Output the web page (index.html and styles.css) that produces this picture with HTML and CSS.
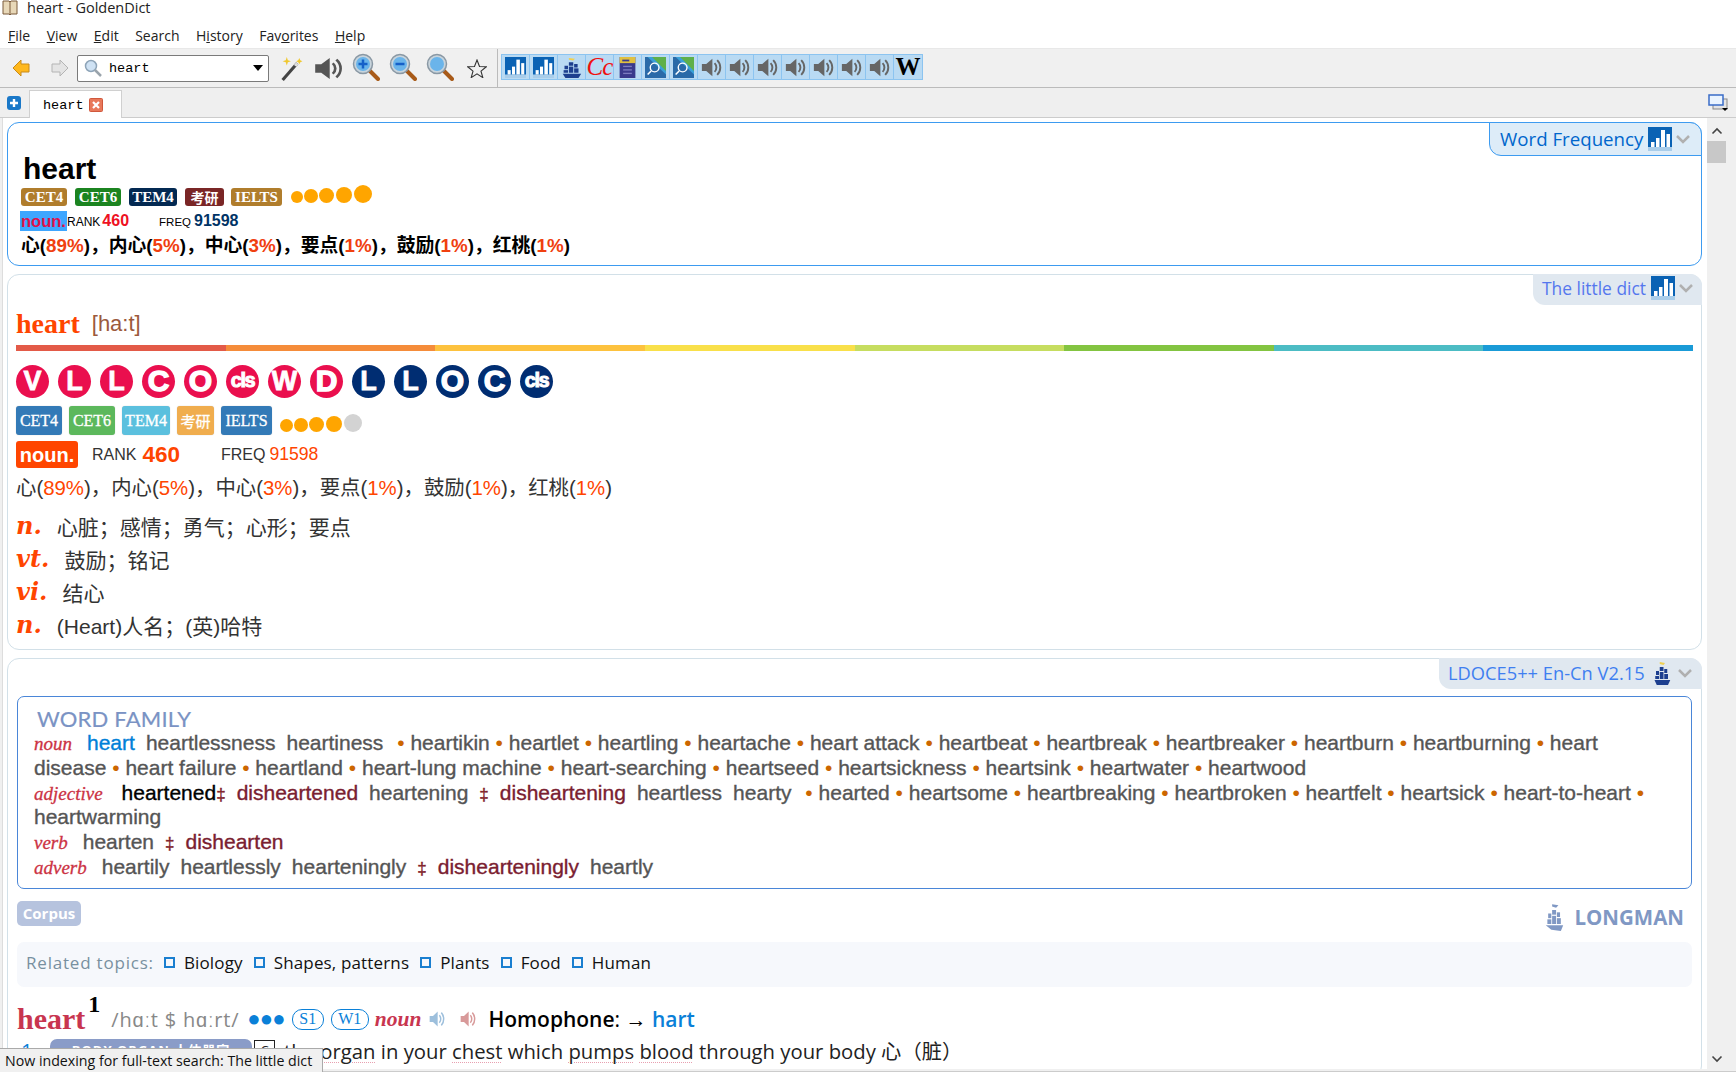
FILE: index.html
```html
<!DOCTYPE html>
<html lang="en">
<head>
<meta charset="utf-8">
<title>heart - GoldenDict</title>
<link rel="stylesheet" href="styles.css">
</head>
<body>
<svg class="defs" width="0" height="0" aria-hidden="true">
  <defs>
    <symbol id="bar" viewBox="0 0 24 24">
      <rect width="24" height="24" fill="#0a62b4"/>
      <rect y="20" width="24" height="4" fill="#a9cdea"/>
      <rect x="3" y="15" width="3.5" height="5" fill="#fff"/>
      <rect x="8" y="11" width="3.5" height="9" fill="#fff"/>
      <rect x="13" y="3" width="4" height="17" fill="#fff"/>
      <rect x="18.5" y="7" width="3.5" height="13" fill="#fff"/>
    </symbol>
    <symbol id="ship" viewBox="0 0 24 24" preserveAspectRatio="none">
      <path d="M9 1l7 1-2 2-5-1z" fill="#f0d050"/>
      <g fill="#1d3f8f">
        <rect x="4" y="10" width="4" height="4"/><rect x="9" y="6" width="5" height="4"/><rect x="15" y="8" width="4" height="4"/>
        <rect x="3" y="15" width="5" height="3"/><rect x="9" y="11" width="5" height="7"/><rect x="15" y="13" width="5" height="5"/>
        <path d="M2 19h21l-3 5H5z"/>
      </g>
    </symbol>
    <symbol id="shipm" viewBox="0 0 24 24" preserveAspectRatio="none">
      <path d="M9 1l8 1-3 2-5-1z" fill="currentColor"/>
      <g fill="currentColor">
        <rect x="4" y="9" width="4" height="4"/><rect x="9" y="6" width="5" height="4"/><rect x="15" y="8" width="4" height="4"/>
        <rect x="3" y="14" width="5" height="4"/><rect x="9" y="11" width="5" height="7"/><rect x="15" y="13" width="5" height="5"/>
        <path d="M1 19h22l-3 5-12-1z"/>
      </g>
    </symbol>
    <symbol id="book" viewBox="0 0 24 24">
      <rect x="3" y="0" width="18" height="24" fill="#3a3a8c"/>
      <rect x="3" y="0" width="18" height="7" fill="#e0c040"/>
      <rect x="6" y="3" width="8" height="2" fill="#3a3a8c"/>
      <rect x="7" y="10" width="10" height="1.5" fill="#7c7cc0"/>
      <rect x="7" y="14" width="10" height="1.5" fill="#7c7cc0"/>
      <rect x="7" y="18" width="10" height="1.5" fill="#7c7cc0"/>
    </symbol>
    <symbol id="find" viewBox="0 0 24 24">
      <rect width="24" height="24" fill="#2a6aa8"/>
      <path d="M6 0h18v18z" fill="#5fb04a"/>
      <path d="M3 0h5l16 16v4z" fill="#3aa0d8"/>
      <circle cx="11" cy="12" r="5" fill="none" stroke="#fff" stroke-width="1.6"/>
      <path d="M7 16l-4 4" stroke="#fff" stroke-width="1.8"/>
    </symbol>
    <symbol id="spk" viewBox="0 0 24 24" preserveAspectRatio="none">
      <path d="M1 8h5l7-6v20l-7-6H1z" fill="currentColor"/>
      <path d="M15.500 7a7 7 0 0 1 0 10M18.500 3.500a12 12 0 0 1 0 17" fill="none" stroke="currentColor" stroke-width="2.200"/>
    </symbol>
    <symbol id="glass" viewBox="0 0 28 28">
      <path d="M17 17l9 9" stroke="#a85a18" stroke-width="4" stroke-linecap="round"/>
      <circle cx="11" cy="11" r="9.500" fill="#c8d4dc" stroke="#8a98a4" stroke-width="1.500"/>
      <circle cx="11" cy="11" r="7" fill="#6ab4ea"/>
    </symbol>
  </defs>
</svg>

<header class="titlebar">
  <svg class="appicon" viewBox="0 0 16 15"><path d="M1 1h6l1 1 1-1h6v13H9l-1 1-1-1H1z" fill="#e8d8b8" stroke="#7a5a3a"/><path d="M8 2v12" stroke="#7a5a3a"/></svg>
  <span>heart - GoldenDict</span>
</header>

<nav class="menubar">
  <span><u>F</u>ile</span><span><u>V</u>iew</span><span><u>E</u>dit</span><span>Search</span><span>H<u>i</u>story</span><span>Fav<u>o</u>rites</span><span><u>H</u>elp</span>
</nav>

<section class="toolbar">
  <svg class="nav-arrow" viewBox="0 0 18 18"><path d="M1 9l8-8v4h8v8H9v4z" fill="#ffb81c" stroke="#c88a18"/></svg>
  <svg class="nav-arrow nav-fwd" viewBox="0 0 18 18"><path d="M17 9L9 1v4H1v8h8v4z" fill="#e4e4e4" stroke="#b4b4b4"/></svg>
  <div class="combo">
    <svg class="combo-mag" viewBox="0 0 18 18"><circle cx="7" cy="7" r="5.500" fill="#cfe2f4" stroke="#8ea4b8" stroke-width="1.500"/><path d="M11 11l6 6" stroke="#9aa4ac" stroke-width="2.500"/></svg>
    <span class="combo-text">heart</span>
    <span class="combo-arrow"></span>
  </div>
  <svg class="t-wand" viewBox="0 0 22 24"><path d="M2 23L16 7" stroke="#444" stroke-width="3"/><path d="M14 9.500l2-2.500" stroke="#ddd" stroke-width="3"/><path d="M6 1l1 3 3 1-3 1-1 3-1-3-3-1 3-1zM18 2l1 2 2 1-2 1-1 2-1-2-2-1 2-1z" fill="#f0c830"/></svg>
  <svg class="t-speaker"><use href="#spk"/></svg>
  <svg class="t-glass" viewBox="0 0 28 28"><use href="#glass"/><path d="M6.500 11h9M11 6.500v9" stroke="#1560c8" stroke-width="2.500"/></svg>
  <svg class="t-glass" viewBox="0 0 28 28"><use href="#glass"/><path d="M6.500 11h9" stroke="#1560c8" stroke-width="2.500"/></svg>
  <svg class="t-glass" viewBox="0 0 28 28"><use href="#glass"/></svg>
  <svg class="t-star" viewBox="0 0 20 19"><path d="M10 1l2.500 6.500 6.800.300-5.300 4.300 1.800 6.500L10 14.900l-5.800 3.700 1.800-6.500L.7 7.800l6.800-.300z" fill="none" stroke="#333" stroke-width="1.100"/></svg>
  <span class="sep"></span>
  <div class="dictbar">
    <button class="db"><svg><use href="#bar"/></svg></button>
    <button class="db"><svg><use href="#bar"/></svg></button>
    <button class="db"><svg><use href="#ship"/></svg></button>
    <button class="db db-cc">Cc</button>
    <button class="db"><svg><use href="#book"/></svg></button>
    <button class="db"><svg><use href="#find"/></svg></button>
    <button class="db"><svg><use href="#find"/></svg></button>
    <button class="db db-s"><svg><use href="#spk"/></svg></button>
    <button class="db db-s"><svg><use href="#spk"/></svg></button>
    <button class="db db-s"><svg><use href="#spk"/></svg></button>
    <button class="db db-s"><svg><use href="#spk"/></svg></button>
    <button class="db db-s"><svg><use href="#spk"/></svg></button>
    <button class="db db-s"><svg><use href="#spk"/></svg></button>
    <button class="db db-s"><svg><use href="#spk"/></svg></button>
    <button class="db db-w">W</button>
  </div>
</section>

<section class="tabstrip">
  <svg class="tab-plus" viewBox="0 0 14 14"><rect width="14" height="14" rx="3" fill="#1a78c8"/><path d="M7 3v8M3 7h8" stroke="#fff" stroke-width="2.400"/></svg>
  <div class="tab">
    <span>heart</span>
    <svg class="tab-close" viewBox="0 0 14 14"><rect x=".5" y=".5" width="13" height="13" rx="1" fill="#e8785a" stroke="#d0583c"/><path d="M4 4l6 6M10 4l-6 6" stroke="#fff" stroke-width="2.200"/></svg>
  </div>
  <svg class="tab-win" viewBox="0 0 20 17"><rect x="5" y="5" width="14" height="10" fill="#e4e4e4" stroke="#888"/><rect x="1" y="1" width="14" height="10" fill="#eaf4ff" stroke="#3a6cc8" stroke-width="1.500"/><path d="M14 14h6l-3 3z" fill="#000"/></svg>
</section>

<main class="main">
  <div class="pane">

    <article class="art art-active art-wf">
      <div class="art-tab tab-wf">
        <span>Word Frequency</span>
        <svg class="tab-icon"><use href="#bar"/></svg>
        <svg class="chev" viewBox="0 0 16 10"><path d="M2 2l6 6 6-6" fill="none" stroke="#b0b0b0" stroke-width="2.500"/></svg>
      </div>
      <h1 class="wf-word">heart</h1>
      <div class="badges wf-badges">
        <span class="bd c-brown">CET4</span><span class="bd c-green">CET6</span><span class="bd c-navy">TEM4</span><span class="bd c-maroon bd-cjk">考研</span><span class="bd c-brown">IELTS</span>
        <span class="dots wf-dots"><i class="d1"></i><i class="d2"></i><i class="d3"></i><i class="d4"></i><i class="d5"></i></span>
      </div>
      <div class="wf-pos">
        <span class="wf-noun">noun.</span><span class="wf-lab">RANK</span><span class="wf-red">460</span><span class="wf-lab wf-freq">FREQ</span><span class="wf-num">91598</span>
      </div>
      <p class="wf-cn">心(<b>89%</b>)，内心(<b>5%</b>)，中心(<b>3%</b>)，要点(<b>1%</b>)，鼓励(<b>1%</b>)，红桃(<b>1%</b>)</p>
    </article>

    <article class="art art-little">
      <div class="art-tab tab-little">
        <span>The little dict</span>
        <svg class="tab-icon"><use href="#bar"/></svg>
        <svg class="chev" viewBox="0 0 16 10"><path d="M2 2l6 6 6-6" fill="none" stroke="#b0b0b0" stroke-width="2.500"/></svg>
      </div>
      <div class="ld-head"><span class="ld-word">heart</span><span class="ld-ph">[ha:t]</span></div>
      <div class="rainbow"><i class="r1"></i><i class="r2"></i><i class="r3"></i><i class="r4"></i><i class="r5"></i><i class="r6"></i><i class="r7"></i><i class="r8"></i></div>
      <div class="circles">
        <span class="ci red">V</span><span class="ci red">L</span><span class="ci red">L</span><span class="ci red big">C</span><span class="ci red big">O</span><span class="ci red cls">cls</span><span class="ci red">W</span><span class="ci red big">D</span>
        <span class="ci navy">L</span><span class="ci navy">L</span><span class="ci navy big">O</span><span class="ci navy big">C</span><span class="ci navy cls">cls</span>
      </div>
      <div class="badges ld-badges">
        <span class="bd b-blue">CET4</span><span class="bd b-green">CET6</span><span class="bd b-cyan">TEM4</span><span class="bd b-orange bd-cjk">考研</span><span class="bd b-blue">IELTS</span>
        <span class="dots ld-dots"><i class="d1"></i><i class="d2"></i><i class="d3"></i><i class="d4"></i><i class="d5 off"></i></span>
      </div>
      <div class="ld-pos">
        <span class="ld-noun">noun.</span><span class="ld-lab">RANK</span><span class="ld-rank">460</span><span class="ld-lab ld-freq">FREQ</span><span class="ld-num">91598</span>
      </div>
      <p class="ld-cn">心(<b>89%</b>)，内心(<b>5%</b>)，中心(<b>3%</b>)，要点(<b>1%</b>)，鼓励(<b>1%</b>)，红桃(<b>1%</b>)</p>
      <ul class="defs-list">
        <li><em>n.</em><span>心脏；感情；勇气；心形；要点</span></li>
        <li><em>vt.</em><span>鼓励；铭记</span></li>
        <li><em>vi.</em><span>结心</span></li>
        <li><em>n.</em><span>(Heart)人名；(英)哈特</span></li>
      </ul>
    </article>

    <article class="art art-ldoce">
      <div class="art-tab tab-ldoce">
        <span>LDOCE5++ En-Cn V2.15</span>
        <svg class="tab-ship"><use href="#ship"/></svg>
        <svg class="chev" viewBox="0 0 16 10"><path d="M2 2l6 6 6-6" fill="none" stroke="#b0b0b0" stroke-width="2.500"/></svg>
      </div>
      <div class="family">
        <h2>WORD FAMILY</h2>
        <p>
          <em>noun</em><a class="self">heart</a><span class="w">heartlessness</span><span class="w w-end">heartiness</span>
          <i>•</i> heartikin <i>•</i> heartlet <i>•</i> heartling <i>•</i> heartache <i>•</i> heart attack <i>•</i> heartbeat <i>•</i> heartbreak <i>•</i> heartbreaker <i>•</i> heartburn <i>•</i> heartburning <i>•</i> heart disease <i>•</i> heart failure <i>•</i> heartland <i>•</i> heart-lung machine <i>•</i> heart-searching <i>•</i> heartseed <i>•</i> heartsickness <i>•</i> heartsink <i>•</i> heartwater <i>•</i> heartwood
        </p>
        <p>
          <em class="adj">adjective</em><span class="blk">heartened</span><s>‡</s><span class="neg">disheartened</span><span class="w">heartening</span><s>‡</s><span class="neg">disheartening</span><span class="w">heartless</span><span class="w w-end">hearty</span>
          <i>•</i> hearted <i>•</i> heartsome <i>•</i> heartbreaking <i>•</i> heartbroken <i>•</i> heartfelt <i>•</i> heartsick <i>•</i> heart-to-heart <i>•</i> heartwarming
        </p>
        <p><em>verb</em><span class="w">hearten</span><s>‡</s><span class="neg">dishearten</span></p>
        <p><em>adverb</em><span class="w">heartily</span><span class="w">heartlessly</span><span class="w">hearteningly</span><s>‡</s><span class="neg">dishearteningly</span><span class="w">heartly</span></p>
      </div>
      <div class="corpus-row">
        <span class="corpus">Corpus</span>
        <div class="longman"><svg><use href="#shipm"/></svg><span>LONGMAN</span></div>
      </div>
      <div class="topics">
        <span class="topics-label">Related topics:</span>
        <span class="topic">Biology</span><span class="topic">Shapes, patterns</span><span class="topic">Plants</span><span class="topic">Food</span><span class="topic">Human</span>
      </div>
      <div class="entry">
        <span class="hw">heart</span><sup class="hn">1</sup>
        <span class="pron">/hɑːt $ hɑːrt/</span>
        <span class="freq">●●●</span>
        <span class="pill">S1</span><span class="pill pill-w">W1</span>
        <span class="epos">noun</span>
        <svg class="sp sp-blue"><use href="#spk"/></svg>
        <svg class="sp sp-red"><use href="#spk"/></svg>
        <span class="homo"><b>Homophone</b>: → <a>hart</a></span>
      </div>
      <div class="sense">
        <span class="snum">1</span>
        <span class="sign">BODY ORGAN 人体器官</span>
        <span class="sbox">C</span>
        <span class="stext">the <u>organ</u> in your <u>chest</u> which <u>pumps</u> <u>blood</u> through your body 心（脏）</span>
      </div>
    </article>

  </div>
  <aside class="scroll">
    <svg class="sc-arrow" viewBox="0 0 12 8"><path d="M1.500 6.500L6 2l4.500 4.500" fill="none" stroke="#444" stroke-width="1.600"/></svg>
    <span class="sc-thumb"></span>
    <span class="sc-fill"></span>
    <svg class="sc-arrow" viewBox="0 0 12 8"><path d="M1.500 1.500L6 6l4.500-4.500" fill="none" stroke="#444" stroke-width="1.600"/></svg>
  </aside>
</main>

<div class="tip">Now indexing for full-text search: The little dict</div>
</body>
</html>
```

FILE: styles.css
```css
* { box-sizing: border-box; }
html, body { margin: 0; padding: 0; }
body {
  width: 1736px; height: 1072px; overflow: hidden; position: relative;
  background: #fff; color: #000;
  font-family: "Liberation Sans", "Noto Sans CJK SC", sans-serif;
  display: flex; flex-direction: column;
}
.defs { position: absolute; }
p, h1, h2, ul { margin: 0; padding: 0; }

.titlebar { height: 24px; display: flex; align-items: flex-start; font: 14.500px/15px "Open Sans", sans-serif; color: #222; }
.appicon { width: 16px; height: 15px; margin: 0 9px 0 2px; }

.menubar { height: 24px; display: flex; gap: 16.500px; padding-left: 8px; font: 14px/24px "Open Sans", sans-serif; color: #222; }

.toolbar { height: 40px; background: #f0f0f0; border-bottom: 1px solid #bbb; border-top: 1px solid #e8e8e8; display: flex; align-items: center; position: relative; }
.nav-arrow { width: 18px; height: 18px; margin-left: 12px; }
.nav-fwd { margin-left: 21px; }
.combo { width: 192px; height: 27px; margin-left: 8px; background: #fff; border: 1px solid #7a7a7a; border-radius: 2px; display: flex; align-items: center; padding-left: 6px; }
.combo-mag { width: 18px; height: 18px; }
.combo-text { font: 13.500px "Liberation Mono", monospace; margin-left: 7px; flex: 1; }
.combo-arrow { width: 0; height: 0; border: 5px solid transparent; border-top: 6px solid #000; border-bottom: 0; margin-right: 5px; }
.t-wand { width: 24px; height: 25px; margin-left: 11px; }
.t-speaker { width: 29px; height: 25px; margin-left: 10px; color: #555; }
.t-glass { width: 28px; height: 28px; margin: -2px 0 0 9px; }
.t-star { width: 20px; height: 19px; margin-left: 13px; }
.sep { width: 1px; height: 38px; background: #bbb; margin-left: 10px; }
.dictbar { display: flex; margin: -2px 0 0 3px; height: 26px; border: 1px solid #8cc4f0; background: #b9daf3; }
.db { width: 28px; height: 24px; padding: 0; border: 0; border-right: 1px solid #8cc4f0; background: transparent; display: flex; align-items: center; justify-content: center; }
.db:last-child { border-right: 0; }
.db svg { width: 21px; height: 21px; }
.db-s { color: #666; }
.db-cc { font: italic 25px/24px "Liberation Serif", serif; color: #f01010; letter-spacing: -1px; }
.db-w { font: bold 25px/24px "Liberation Serif", serif; color: #000; }

.tabstrip { height: 30px; background: #efefef; border-bottom: 1px solid #ccc; display: flex; align-items: flex-end; position: relative; flex: none; }
.tab-plus { width: 14px; height: 14px; margin: 0 8px 7px 7px; }
.tab { width: 93px; height: 28px; margin-bottom: -1px; background: #fff; border: 1px solid #d0d0d0; border-bottom: 0; display: flex; align-items: center; padding: 1px 0 0 13px; font: 13.500px "Liberation Mono", monospace; }
.tab-close { width: 14px; height: 14px; margin-left: 5px; }
.tab-win { width: 20px; height: 17px; margin: 0 8px 6px auto; }

.main { flex: 1; min-height: 0; display: flex; background: #f0f0f0; padding: 0 6px 2px 2px; border-bottom: 1px solid #ccc; }
.pane { width: 1705px; background: #fff; border-left: 1px solid #ddd; padding: 4px 5px 0 4px; overflow: hidden; }
.scroll { width: 19px; margin-top: 2px; background: #f0f0f0; display: flex; flex-direction: column; align-items: center; }
.sc-arrow { width: 12px; height: 8px; margin: 7px 0 6px; flex: none; }
.sc-thumb { width: 19px; height: 22px; background: #c8c8c8; }
.sc-fill { flex: 1; }

.art { position: relative; border: 1px solid #d2e0e8; border-radius: 12px; background: #fff; margin-bottom: 8px; }
.art-active { border-color: #3d9bf0; }
.art-tab { position: absolute; right: -1px; top: -1px; display: flex; align-items: center; font-family: "Open Sans", sans-serif; border-radius: 0 12px 0 12px; white-space: nowrap; }
.tab-wf { height: 34px; width: 213px; background: #ddecf8; border: 1px solid #3d9bf0; padding: 0 0 1px 10px; color: #0066cc; font-size: 18.700px; }
.tab-little { height: 31px; width: 169px; background: #e0e8f0; padding: 0 0 3px 9px; color: #5577ee; font-size: 17.400px; }
.tab-ldoce { height: 31px; width: 263px; background: #e0e8f0; padding: 0 0 2px 9px; color: #3f7ff0; font-size: 18.300px; }
.tab-icon { width: 24px; height: 24px; margin-left: 5px; flex: none; }
.tab-ship { width: 18px; height: 24px; margin-left: 8px; flex: none; }
.chev { width: 16px; height: 10px; margin-left: 3px; flex: none; }
.tab-ldoce .chev { margin-left: 6px; }

.art-wf { height: 144px; padding: 26px 0 0 13px; }
.wf-word { font: bold 30px/39px "Liberation Sans", sans-serif; margin-left: 2px; }
.badges { display: flex; align-items: center; }
.bd { display: flex; align-items: center; justify-content: center; color: #fff; font-family: "Liberation Serif", "Noto Sans CJK SC", serif; font-weight: bold; border-radius: 3px; }
.bd-cjk { font-family: "Noto Sans CJK SC", sans-serif; }
.wf-badges { height: 18px; }
.wf-badges .bd { height: 18px; font-size: 15px; margin-right: 8px; width: 46px; }
.wf-badges .bd:nth-child(3) { width: 48px; }
.wf-badges .bd:nth-child(4) { width: 39px; font-size: 14px; margin-right: 7px; }
.wf-badges .bd:nth-child(5) { width: 51px; }
.c-brown { background: #b07d2c; } .c-green { background: #1b8420; } .c-navy { background: #032952; } .c-maroon { background: #7a2626; }
.dots { display: flex; align-items: flex-end; align-self: flex-end; }
.dots i { display: block; border-radius: 50%; background: #ffa500; margin-right: 1px; }
.wf-dots { margin: 0 0 3px 1px; }
.wf-dots .d1 { width: 12px; height: 12px; } .wf-dots .d2 { width: 14px; height: 14px; } .wf-dots .d3 { width: 15px; height: 15px; margin-right: 2px; } .wf-dots .d4 { width: 16px; height: 16px; margin-right: 2px; } .wf-dots .d5 { width: 18px; height: 18px; }
.wf-pos { display: flex; align-items: center; height: 20px; margin-top: 5px; margin-left: -1px; }
.wf-noun { font-weight: bold; font-size: 16.500px; line-height: 20px; background: #3ea6ff; color: #e0104a; padding: 0 1px; width: 47px; }
.wf-lab { font-size: 12px; margin-top: 2px; }
.wf-red { font-weight: bold; font-size: 16px; color: #ee1122; margin-left: 2px; }
.wf-freq { margin-left: 30px; font-size: 11.500px; }
.wf-num { font-weight: bold; font-size: 16px; color: #003366; margin-left: 3px; }
.wf-cn { font-size: 18.800px; font-weight: bold; line-height: 26px; margin-top: 2px; }
.wf-cn b { color: #f04010; font-weight: bold; }

.art-little { height: 376px; padding: 0 8px; }
.ld-head { height: 42px; margin-top: 28px; display: flex; align-items: center; line-height: 42px; }
.ld-word { font: bold 28px/42px "Liberation Serif", serif; color: #ff4500; }
.ld-ph { font-size: 22px; color: #9c5a3c; margin-left: 12px; }
.rainbow { display: flex; height: 6px; }
.rainbow i { flex: 1; }
.r1 { background: #e35a48; } .r2 { background: #f58c3a; } .r3 { background: #fdc23e; } .r4 { background: #f9e04a; } .r5 { background: #c6dd60; } .r6 { background: #83c441; } .r7 { background: #4cbcc4; } .r8 { background: #1a9bd7; }
.circles { display: flex; gap: 9px; margin-top: 14px; height: 33px; }
.ci { width: 33px; height: 33px; border-radius: 50%; color: #fff; font: bold 27px/33px "Liberation Sans", sans-serif; text-align: center; -webkit-text-stroke: .8px #fff; }
.ci.red { background: #ea0f4e; } .ci.navy { background: #002d72; }
.ci.big { font-size: 30px; line-height: 32px; -webkit-text-stroke: 1.400px #fff; }
.ci.cls { font-size: 20px; letter-spacing: -1.500px; line-height: 31px; -webkit-text-stroke: 1px #fff; }
.ld-badges { height: 29px; margin-top: 8px; }
.ld-badges .bd { height: 29px; width: 46px; margin-right: 7px; font-size: 16px; font-weight: normal; -webkit-text-stroke: .3px #fff; border-radius: 3px; box-shadow: 0 0 1px #bbb; }
.ld-badges .bd:nth-child(3) { width: 48px; }
.ld-badges .bd:nth-child(4) { width: 37px; font-size: 15px; }
.ld-badges .bd:nth-child(5) { width: 51px; }
.b-blue { background: #337ab7; } .b-green { background: #5cb85c; } .b-cyan { background: #5bc0de; } .b-orange { background: #f0ad4e; }
.ld-dots { margin: 0 0 3px 1px; }
.ld-dots .d1 { width: 13px; height: 13px; } .ld-dots .d2 { width: 14px; height: 14px; } .ld-dots .d3 { width: 15px; height: 15px; margin-right: 2px; } .ld-dots .d4 { width: 16px; height: 16px; margin-right: 2px; } .ld-dots .d5 { width: 18px; height: 18px; }
.dots i.off { background: #d3d3d3; }
.ld-pos { display: flex; align-items: center; height: 27px; margin-top: 6px; color: #333; }
.ld-noun { width: 62px; height: 27px; background: #ff4500; color: #fff; font: bold 20px/28px "Liberation Sans", sans-serif; border-radius: 3px; text-align: center; }
.ld-lab { font-size: 16px; margin-left: 14px; }
.ld-rank { font-weight: bold; font-size: 22.500px; color: #ff4500; margin-left: 6px; }
.ld-freq { margin-left: 41px; }
.ld-num { font-size: 17.600px; color: #ff4500; margin-left: 4px; }
.ld-cn { font-size: 20.400px; line-height: 28px; margin-top: 6px; color: #333; }
.ld-cn b { font-weight: normal; color: #ff4500; }
.defs-list { list-style: none; margin-top: 7px; }
.defs-list li { height: 33px; display: flex; align-items: center; font-size: 21px; color: #333; }
.defs-list em { font: italic bold 24px/33px "DejaVu Serif", serif; color: #ff4500; margin-right: 15px; }

.art-ldoce { height: 420px; padding: 0 9px; margin-bottom: 0; }
.family { margin-top: 37px; height: 193px; border: 1px solid #4a86d8; border-radius: 7px; padding: 0 30px 0 16px; color: #555; font-size: 21px; line-height: 24.800px; -webkit-text-stroke: .35px #555; }
.family h2 { font: 400 22px/25px "Lato", sans-serif; padding-top: 9px; color: #7a93c4; margin-left: 3px; letter-spacing: .2px; -webkit-text-stroke: .2px #7a93c4; }
.family em { font: italic 19px/0 "Liberation Serif", serif; color: #cc3344; margin-right: 15px; -webkit-text-stroke: .3px #cc3344; }
.family em.adj { margin-right: 19px; }
.family .self { color: #0080d8; margin-right: 11px; -webkit-text-stroke: .35px #0080d8; }
.family .w { margin-right: 11px; }
.family .w-end { margin-right: 8px; }
.family i { font-style: normal; color: #cc6600; -webkit-text-stroke: 0; }
.family s { text-decoration: none; color: #802028; font-size: 17px; line-height: 0; margin-right: 11px; -webkit-text-stroke: .35px #802028; }
.family .neg { color: #7a2030; margin-right: 11px; -webkit-text-stroke: .35px #7a2030; }
.family .blk { color: #000; -webkit-text-stroke: .35px #000; }
.corpus-row { display: flex; justify-content: space-between; align-items: flex-start; height: 30px; margin-top: 12px; }
.corpus { width: 64px; height: 25px; background: #b6c3de; color: #fff; border-radius: 5px; font: bold 15px/25px "Open Sans", sans-serif; text-align: center; }
.longman { display: flex; align-items: center; color: #8098c4; font: bold 20.500px/28px "Open Sans", sans-serif; margin-top: 2px; margin-right: 8px; }
.longman svg { width: 19px; height: 28px; margin-right: 10px; }
.topics { height: 45px; margin-top: 11px; background: #f6f8fc; border-radius: 7px; padding: 0 0 5px 9px; display: flex; align-items: center; font: 17px "Open Sans", sans-serif; color: #111; letter-spacing: .15px; }
.topics-label { color: #7890a0; margin-right: 10px; letter-spacing: .8px; }
.topic { margin-right: 11px; display: flex; align-items: center; }
.topic::before { content: ""; box-sizing: border-box; flex: none; width: 11px; height: 11px; border: 2px solid #1a7fd0; margin-right: 9px; }
.entry { height: 42px; margin-top: 11px; display: flex; align-items: center; white-space: nowrap; }
.hw { font: bold 30px/42px "Liberation Serif", serif; color: #c8354f; }
.hn { font: bold 24px/24px "Liberation Serif", serif; align-self: flex-start; margin: -6px 0 0 3px; }
.pron { font: 20px "Open Sans", sans-serif; color: #888; margin-left: 11px; letter-spacing: .8px; }
.freq { color: #0a80d8; font-size: 22px; margin-left: 8px; letter-spacing: -.8px; }
.pill { height: 21px; width: 32px; border: 1.500px solid #0a80d8; border-radius: 10px; color: #0a80d8; text-align: center; font: 16px/18px "Liberation Serif", serif; margin-left: 7px; }
.pill-w { width: 38px; }
.epos { font: italic bold 21.500px "Liberation Serif", serif; color: #c8354f; margin-left: 6px; }
.sp { width: 16px; height: 18px; }
.sp-blue { color: #9dbfdc; margin-left: 8px; }
.sp-red { color: #d89a9a; margin-left: 15px; }
.homo { font: 21px "Open Sans", sans-serif; margin-left: 12px; }
.homo b { font-weight: 600; }
.homo a { color: #0a80d8; font-weight: 600; }
.sense { display: flex; align-items: center; height: 26px; margin-top: -3px; white-space: nowrap; font: 20.300px "Open Sans", "Noto Sans CJK SC", sans-serif; color: #222; }
.snum { width: 33px; color: #0a80d8; padding-left: 4px; }
.sign { width: 202px; height: 22px; background: #8a9cc8; color: #fff; font-size: 13px; line-height: 22px; text-align: center; border-radius: 7px 7px 0 0; letter-spacing: 1px; font-weight: bold; }
.sbox { width: 21px; height: 20px; border: 1px solid #222; margin: 0 9px 0 2px; font-size: 13px; line-height: 18px; text-align: center; }
.stext u { text-decoration: underline dotted #e8a0b0 1px; text-underline-offset: 3px; }

.tip { position: absolute; left: 0; bottom: 0; width: 323px; height: 24px; background: #f0f0f0; border: 1px solid #aaa; border-width: 1px 1px 0 0; font: 14.200px/24px "Open Sans", sans-serif; padding-left: 5px; color: #111; white-space: nowrap; }
```
